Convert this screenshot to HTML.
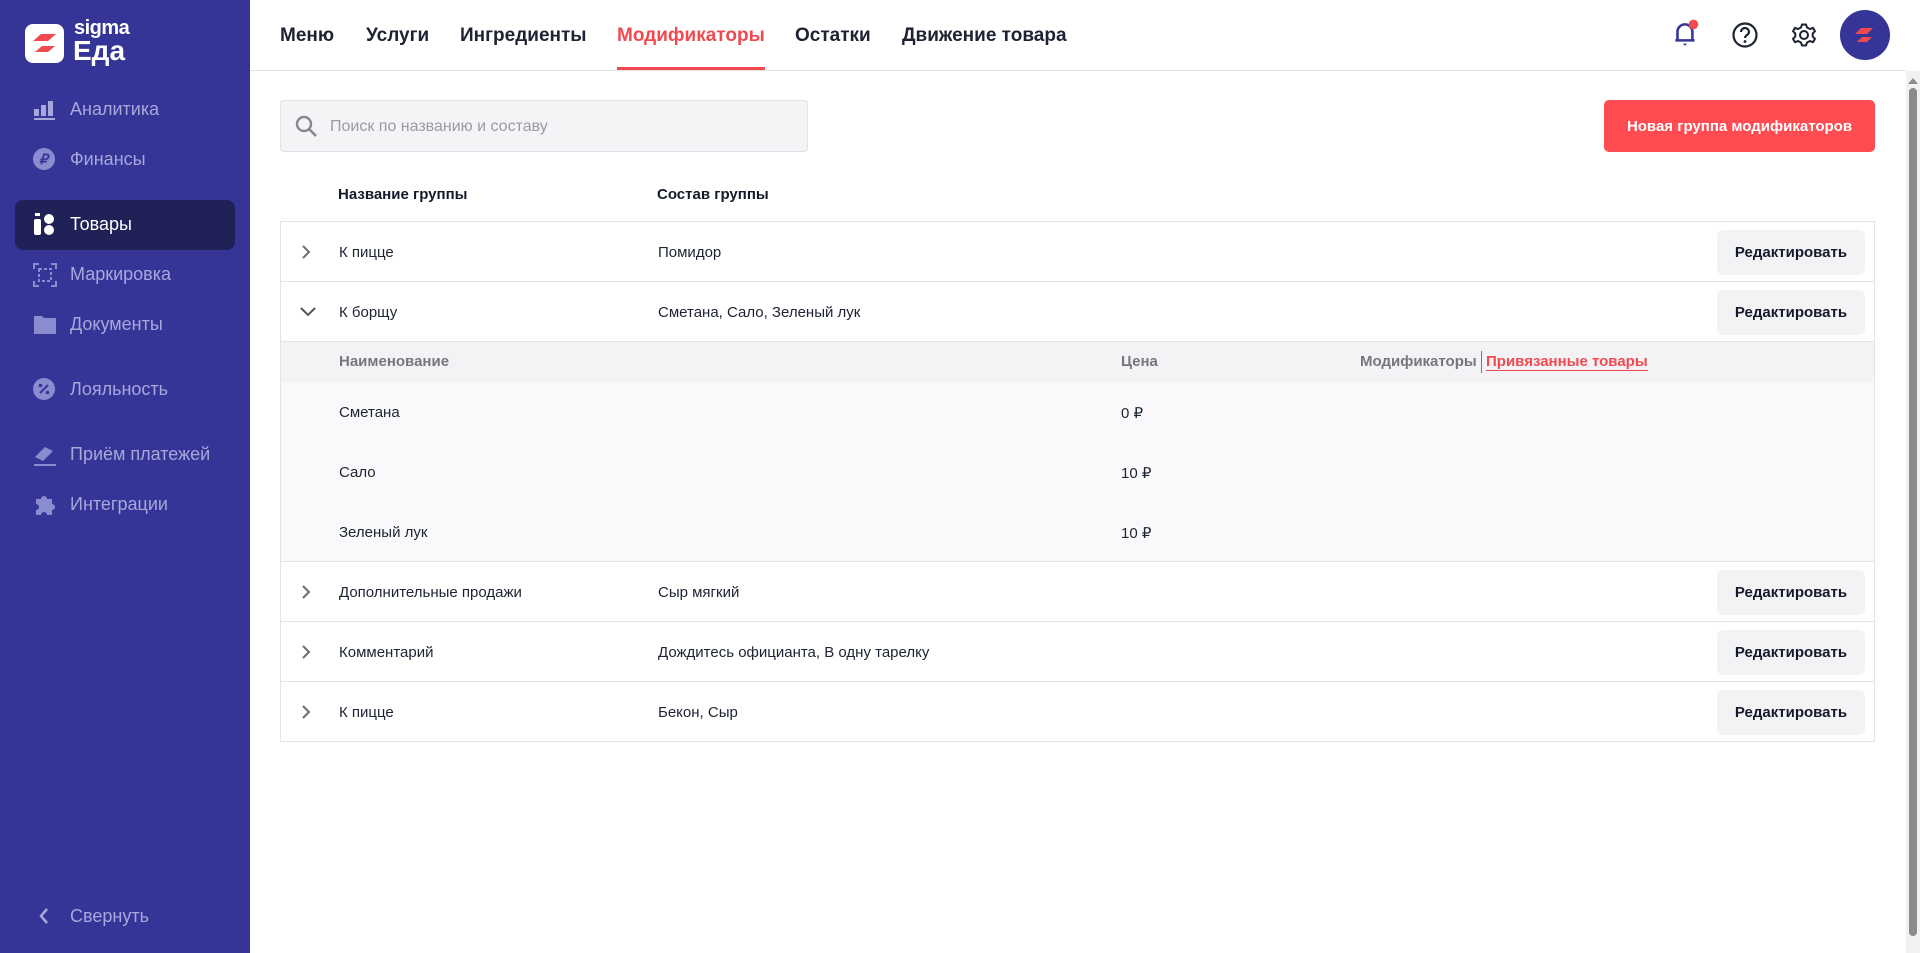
<!DOCTYPE html>
<html><head><meta charset="utf-8"><style>
*{box-sizing:border-box;margin:0;padding:0}
body{width:1920px;height:953px;overflow:hidden;font-family:"Liberation Sans",sans-serif;background:#fff;position:relative;color:#1d2333}
.sb{position:absolute;left:0;top:0;width:250px;height:953px;background:#343597}
.logo{position:absolute;left:25px;top:24px;width:39px;height:39px;background:#fff;border-radius:8px}
.lt1{position:absolute;left:74px;top:17px;color:#fff;font-size:20px;font-weight:bold;letter-spacing:-0.5px}
.lt2{position:absolute;left:73px;top:35px;color:#fff;font-size:28px;font-weight:bold}
.nav{position:absolute;left:0;width:250px;height:20px;color:#a6a8dc;font-size:18px}
.nav span{position:absolute;left:70px;top:-2px}
.nav i{position:absolute;left:33px;top:-3px;width:24px;height:24px;display:block}
.act{position:absolute;left:15px;top:200px;width:220px;height:50px;background:#1f2157;border-radius:8px}
.top a{position:absolute;top:25px;font-size:19px;font-weight:bold;color:#1d2333;text-decoration:none}
.hline{position:absolute;left:250px;top:70px;width:1656px;height:1px;background:#e3e3e6}
.search{position:absolute;left:280px;top:100px;width:528px;height:52px;background:#f4f4f6;border:1px solid #e2e2e6;border-radius:4px}
.search span{position:absolute;left:49px;top:17px;color:#9a9ba3;font-size:16px}
.btn{position:absolute;left:1604px;top:100px;width:271px;height:52px;background:#ff4b52;border-radius:5px;color:#fff;font-weight:bold;font-size:15px;text-align:center;line-height:53px}
.th{position:absolute;top:186px;font-size:15px;font-weight:bold;color:#141a2b}
.tbl{position:absolute;left:280px;top:221px;width:1595px;height:521px;border:1px solid #e4e4e6}
.row{position:absolute;left:0;width:1593px;height:60px;border-bottom:1px solid #e4e4e6;font-size:15px}
.row .c1{position:absolute;left:58px;top:22px}
.row .c2{position:absolute;left:377px;top:22px}
.row .ed{position:absolute;left:1436px;top:8px;width:148px;height:45px;background:#f3f3f6;border-radius:6px;font-weight:bold;text-align:center;line-height:45px;color:#141a2b}
.row svg{position:absolute;left:18px;top:22px}
.sub{position:absolute;left:0;top:120px;width:1593px;height:220px;background:#f9f9fb;border-bottom:1px solid #e4e4e6}
.subh{position:absolute;left:0;top:0;width:1593px;height:40px;background:#f3f3f6;font-size:15px;font-weight:bold;color:#75767f}
.subh span{position:absolute;top:11px}
.si{position:absolute;font-size:15px}
.scr{position:absolute;left:1906px;top:71px;width:14px;height:882px;background:#f1f1f1}
.thumb{position:absolute;left:1909px;top:88px;width:8px;height:848px;background:#8b8b8b;border-radius:4px}
</style></head><body>
<div class="sb">
<div class="logo"><svg width="39" height="39" viewBox="0 0 39 39"><path d="M8 17 L16 10 H31 L23 17Z" fill="#f04a50"/><path d="M10 28 L17 22 H30 L23 28Z" fill="#f04a50"/></svg></div>
<div class="lt1">sigma</div><div class="lt2">Еда</div>
<div class="nav" style="top:101px"><i><svg width="24" height="24"><rect x="1" y="11" width="5" height="7" fill="#a6a8dc"/><rect x="8" y="7" width="5" height="11" fill="#a6a8dc"/><rect x="15" y="3" width="5" height="15" fill="#a6a8dc"/><rect x="1" y="20" width="21" height="2" fill="#a6a8dc"/></svg></i><span>Аналитика</span></div>
<div class="nav" style="top:151px"><i><svg width="24" height="24"><circle cx="11" cy="11" r="11" fill="#8a8cd0"/><text x="6" y="16" font-size="14" font-weight="bold" fill="#343597" font-family="Liberation Sans">₽</text></svg></i><span>Финансы</span></div>
<div class="act"></div>
<div class="nav" style="top:216px;color:#fff"><i><svg width="24" height="24"><rect x="1" y="6" width="7" height="16" rx="2" fill="#fff"/><rect x="2" y="0" width="5" height="3" fill="#fff"/><circle cx="16" cy="6" r="5" fill="#fff"/><circle cx="16" cy="17" r="5" fill="#fff"/></svg></i><span>Товары</span></div>
<div class="nav" style="top:266px"><i><svg width="24" height="24" fill="none" stroke="#8a8cd0" stroke-width="2"><path d="M1 6V1h5M18 1h5v5M23 18v5h-5M6 23H1v-5"/><rect x="6" y="6" width="12" height="12" stroke-dasharray="3 2"/></svg></i><span>Маркировка</span></div>
<div class="nav" style="top:316px"><i><svg width="24" height="24"><path d="M1 3h8l2 2h12v16H1z" fill="#8a8cd0"/></svg></i><span>Документы</span></div>
<div class="nav" style="top:381px"><i><svg width="24" height="24"><circle cx="11" cy="11" r="11" fill="#8a8cd0"/><path d="M7 15 L15 7" stroke="#343597" stroke-width="2"/><circle cx="7.5" cy="7.5" r="1.8" fill="#343597"/><circle cx="14.5" cy="14.5" r="1.8" fill="#343597"/></svg></i><span>Лояльность</span></div>
<div class="nav" style="top:446px"><i><svg width="24" height="24"><path d="M2 14 L12 4 L20 8 L10 18Z" fill="#8a8cd0"/><rect x="1" y="21" width="22" height="2" fill="#8a8cd0"/></svg></i><span>Приём платежей</span></div>
<div class="nav" style="top:496px"><i><svg width="24" height="24"><path d="M3 6h5a3 3 0 016 0h5v5a3 3 0 010 6v5h-5a3 3 0 00-6 0H3v-5a3 3 0 000-6z" fill="#8a8cd0"/></svg></i><span>Интеграции</span></div>
<div class="nav" style="top:908px"><i><svg width="24" height="24"><path d="M14 4 L8 11 L14 18" fill="none" stroke="#a6a8dc" stroke-width="2.5"/></svg></i><span>Свернуть</span></div>
</div>
<div class="top">
<a style="left:280px">Меню</a><a style="left:366px">Услуги</a><a style="left:460px">Ингредиенты</a><a style="left:617px;color:#f04a50">Модификаторы</a><a style="left:795px">Остатки</a><a style="left:902px">Движение товара</a>
</div>
<div style="position:absolute;left:617px;top:67px;width:148px;height:3px;background:#f04a50"></div>
<div class="hline"></div>
<svg style="position:absolute;left:1670px;top:18px" width="32" height="32" viewBox="0 0 30 30"><path d="M7 21 V13 a7 7 0 0114 0 V21 H5 H23" fill="none" stroke="#343597" stroke-width="2.4"/><path d="M12 24h4l-2 2z" fill="#343597"/><circle cx="22" cy="6" r="4.5" fill="#f04a50"/></svg>
<svg style="position:absolute;left:1731px;top:21px" width="28" height="28" viewBox="0 0 28 28"><circle cx="14" cy="14" r="11.5" fill="none" stroke="#1d2333" stroke-width="2.2"/><path d="M10 11a4 4 0 118 0c0 3-4 3-4 6" fill="none" stroke="#1d2333" stroke-width="2.2"/><circle cx="14" cy="20.5" r="1.4" fill="#1d2333"/></svg>
<svg style="position:absolute;left:1790px;top:21px" width="28" height="28" viewBox="0 0 28 28"><path d="M12 2h4l1 3 3 1.5 3-1.2 2 3.4-2.3 2.3v3l2.3 2.3-2 3.4-3-1.2L17 20l-1 3h-4l-1-3-3-1.5-3 1.2-2-3.4 2.3-2.3v-3L3 8.7l2-3.4 3 1.2L11 5z" fill="none" stroke="#1d2333" stroke-width="2" stroke-linejoin="round" transform="translate(0,1.5)"/><circle cx="14" cy="14" r="4" fill="none" stroke="#1d2333" stroke-width="2"/></svg>
<div style="position:absolute;left:1840px;top:10px;width:50px;height:50px;border-radius:50%;background:#343597"><svg width="50" height="50"><path d="M15 24 L21 18 H33 L27 24Z" fill="#f04a50"/><path d="M17 32 L22 27 H32 L27 32Z" fill="#f04a50"/></svg></div>
<div class="scr"></div><div class="thumb"></div>
<svg style="position:absolute;left:1908px;top:77px" width="10" height="8"><path d="M0 7L5 1 10 7z" fill="#8b8b8b"/></svg>
<div class="search"><svg style="position:absolute;left:14px;top:14px" width="24" height="24"><circle cx="9" cy="9" r="7" fill="none" stroke="#85868e" stroke-width="2.4"/><path d="M14 14l7 7" stroke="#85868e" stroke-width="2.6"/></svg><span>Поиск по названию и составу</span></div>
<div class="btn">Новая группа модификаторов</div>
<div class="th" style="left:338px">Название группы</div>
<div class="th" style="left:657px">Состав группы</div>
<div class="tbl">
<div class="row" style="top:0"><svg width="14" height="16"><path d="M4 2l6 6-6 6" fill="none" stroke="#6b6c74" stroke-width="2"/></svg><span class="c1">К пицце</span><span class="c2">Помидор</span><div class="ed">Редактировать</div></div>
<div class="row" style="top:60px"><svg width="18" height="16"><path d="M2 4l7 7 7-7" fill="none" stroke="#555660" stroke-width="2"/></svg><span class="c1">К борщу</span><span class="c2">Сметана, Сало, Зеленый лук</span><div class="ed">Редактировать</div></div>
<div class="sub">
<div class="subh"><span style="left:58px">Наименование</span><span style="left:840px">Цена</span><span style="left:1079px">Модификаторы</span><span style="left:1200px;top:9px;width:1px;height:22px;background:#75767f"></span><span style="left:1205px;color:#f04a50;border-bottom:1.5px solid #f04a50">Привязанные товары</span></div>
<span class="si" style="left:58px;top:62px">Сметана</span><span class="si" style="left:840px;top:62px">0 ₽</span>
<span class="si" style="left:58px;top:122px">Сало</span><span class="si" style="left:840px;top:122px">10 ₽</span>
<span class="si" style="left:58px;top:182px">Зеленый лук</span><span class="si" style="left:840px;top:182px">10 ₽</span>
</div>
<div class="row" style="top:340px"><svg width="14" height="16"><path d="M4 2l6 6-6 6" fill="none" stroke="#6b6c74" stroke-width="2"/></svg><span class="c1">Дополнительные продажи</span><span class="c2">Сыр мягкий</span><div class="ed">Редактировать</div></div>
<div class="row" style="top:400px"><svg width="14" height="16"><path d="M4 2l6 6-6 6" fill="none" stroke="#6b6c74" stroke-width="2"/></svg><span class="c1">Комментарий</span><span class="c2">Дождитесь официанта, В одну тарелку</span><div class="ed">Редактировать</div></div>
<div class="row" style="top:460px;border-bottom:none"><svg width="14" height="16"><path d="M4 2l6 6-6 6" fill="none" stroke="#6b6c74" stroke-width="2"/></svg><span class="c1">К пицце</span><span class="c2">Бекон, Сыр</span><div class="ed">Редактировать</div></div>
</div>
</body></html>
